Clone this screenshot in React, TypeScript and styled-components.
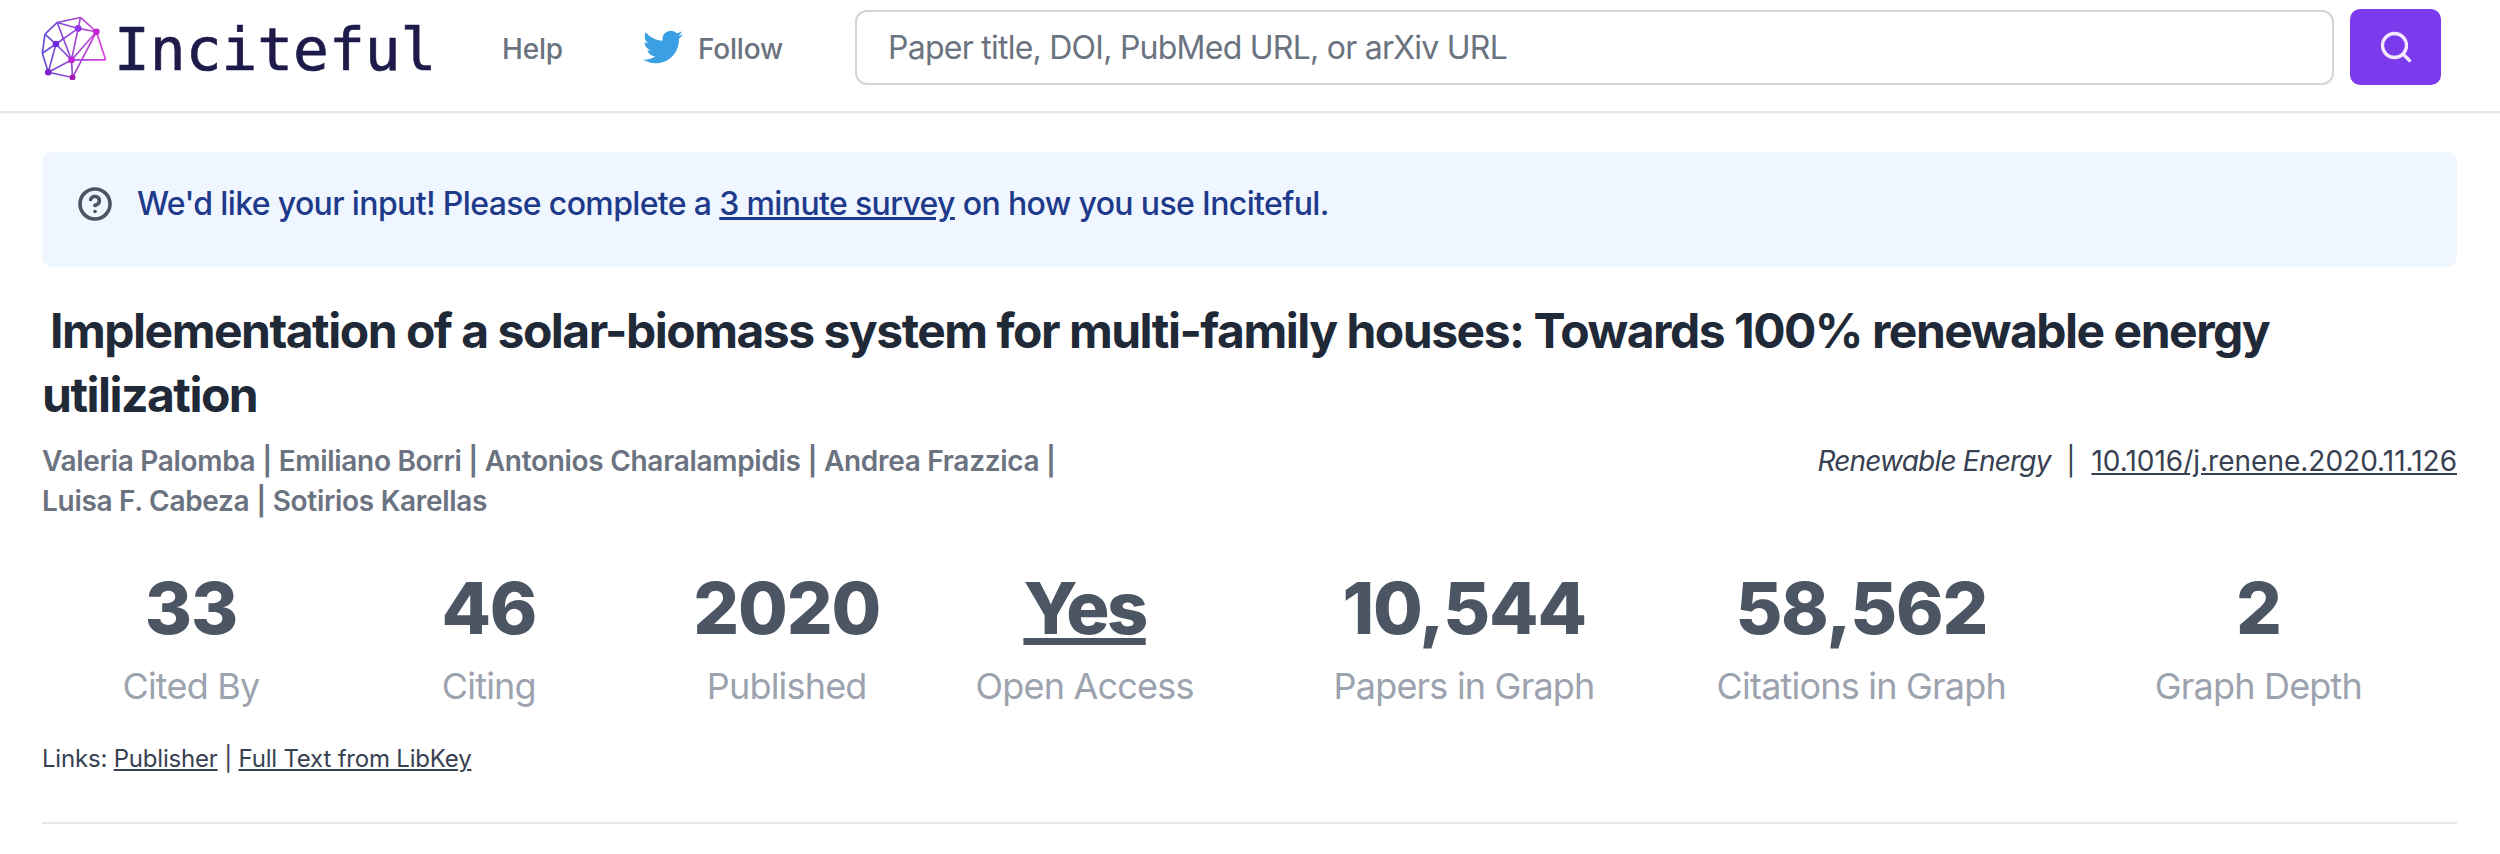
import React from 'react';
import styled, { createGlobalStyle } from 'styled-components';
import { Search, CircleHelp } from 'lucide-react';
import { FaTwitter } from 'react-icons/fa';

const GlobalStyle = createGlobalStyle`
  html, body {
    margin: 0;
    background: #fff;
    font-family: Inter, "Liberation Sans", sans-serif;
  }
  * { box-sizing: border-box; }
`;

const Header = styled.header`
  display: flex;
  align-items: center;
  height: 113px;
  padding: 0 59px 17px 40px;
  border-bottom: 2px solid #e5e7eb;
  box-shadow: 0 1px 3px rgba(0, 0, 0, 0.06);
`;

const Brand = styled.a`
  display: flex;
  align-items: center;
  gap: 6px;
  width: 462px;
  flex: none;
`;

const Wordmark = styled.span`
  margin-top: 6px;
  font-family: "DejaVu Sans Mono", monospace;
  font-size: 59.5px;
  line-height: 64px;
  color: #1e1b4b;
  -webkit-text-stroke: 0.7px #1e1b4b;
`;

const NavLink = styled.a<{ $width: number }>`
  display: flex;
  align-items: center;
  gap: 15px;
  width: ${(p) => p.$width}px;
  flex: none;
  padding-top: 4px;
  font-size: 28px;
  font-weight: 500;
  letter-spacing: -0.2px;
  color: #6b7280;
  svg { margin-top: -4px; }
`;

const SearchInput = styled.div`
  flex: 1;
  height: 75px;
  display: flex;
  align-items: center;
  padding: 0 31px;
  border: 2px solid #d1d5db;
  border-radius: 12px;
  font-size: 32px;
  letter-spacing: -0.75px;
  color: #6b7280;
`;

const SearchButton = styled.button`
  flex: none;
  width: 91px;
  height: 76px;
  margin-left: 16px;
  display: flex;
  align-items: center;
  justify-content: center;
  background: #7c3aed;
  border: 0;
  border-radius: 10px;
  color: #f3e8ff;
`;

const Main = styled.main`
  padding: 39px 43px 0 42px;
`;

const Notice = styled.div`
  display: flex;
  align-items: center;
  gap: 24px;
  height: 115px;
  padding: 0 35px 12px;
  background: #eff6ff;
  border-radius: 10px;
  font-size: 32px;
  font-weight: 500;
  letter-spacing: -0.64px;
  color: #1e3a8a;
  svg { color: #4b5563; flex: none; }
  a { color: inherit; text-decoration: underline; }
`;

const Title = styled.h1`
  margin: 32px 0 0;
  font-size: 48px;
  line-height: 64px;
  font-weight: 700;
  letter-spacing: -1.5px;
  color: #1f2937;
  text-indent: 8px;
`;

const MetaRow = styled.div`
  display: flex;
  justify-content: space-between;
  margin-top: 14px;
`;

const Authors = styled.div`
  width: 1050px;
  font-size: 28px;
  line-height: 40px;
  font-weight: 600;
  letter-spacing: -0.3px;
  color: #6b7280;
`;

const Source = styled.div`
  font-size: 28px;
  line-height: 40px;
  color: #374151;
  em { font-style: italic; letter-spacing: -0.8px; }
  a { color: inherit; text-decoration: underline; }
`;

const StatsGrid = styled.div`
  display: grid;
  grid-template-columns: 1fr 1fr;
  gap: 32px;
  margin-top: 47px;
`;

const StatGroup = styled.div<{ $cols: number }>`
  display: grid;
  grid-template-columns: repeat(${(p) => p.$cols}, 1fr);
`;

const Stat = styled.div`
  text-align: center;
`;

const StatValue = styled.div<{ $link?: boolean }>`
  font-size: 72px;
  line-height: 80px;
  font-weight: 800;
  letter-spacing: ${(p) => (p.$link ? '-2.5px' : '-1.2px')};
  color: #4b5563;
  text-decoration: ${(p) => (p.$link ? 'underline' : 'none')};
`;

const StatLabel = styled.div`
  margin-top: 14px;
  font-size: 36px;
  line-height: 48px;
  letter-spacing: -0.8px;
  color: #9ca3af;
`;

const Links = styled.div`
  margin-top: 33px;
  font-size: 24px;
  line-height: 32px;
  letter-spacing: -0.2px;
  color: #374151;
  a { color: inherit; text-decoration: underline; }
`;

const Divider = styled.hr`
  margin: 47px 0 0;
  border: 0;
  border-top: 2px solid #e5e7eb;
`;

const edges = [
  [75, 97, 112, 62], [112, 62, 182, 47], [182, 47, 230, 90], [112, 62, 175, 80],
  [182, 47, 175, 80], [175, 80, 230, 90], [230, 90, 258, 175], [258, 175, 155, 175],
  [230, 90, 155, 175], [175, 80, 155, 175], [112, 62, 155, 175], [175, 80, 108, 127],
  [75, 97, 108, 127], [75, 97, 67, 155], [108, 127, 67, 155], [108, 127, 155, 175],
  [67, 155, 85, 212], [108, 127, 85, 212], [85, 212, 155, 175], [85, 212, 158, 228],
  [155, 175, 158, 228], [230, 90, 158, 228],
];

const nodes = [
  [108, 127, 10, '#6d28d9'], [175, 80, 10, '#9333ea'], [230, 90, 10, '#c026d3'],
  [155, 175, 10, '#c026d3'], [85, 212, 10, '#7e22ce'], [158, 228, 9, '#a21caf'],
] as const;

const Logo = () => (
  <svg width="68" height="65" viewBox="60 40 205 195" fill="none">
    <defs>
      <linearGradient id="net" x1="60" y1="0" x2="265" y2="0" gradientUnits="userSpaceOnUse">
        <stop offset="0" stopColor="#5b4fd6" />
        <stop offset="1" stopColor="#e23fd8" />
      </linearGradient>
    </defs>
    {edges.map(([x1, y1, x2, y2], i) => (
      <line key={i} x1={x1} y1={y1} x2={x2} y2={y2} stroke="url(#net)" strokeWidth="5" />
    ))}
    {nodes.map(([cx, cy, r, fill], i) => (
      <circle key={i} cx={cx} cy={cy} r={r} fill={fill} />
    ))}
  </svg>
);

const stats = [
  [
    { value: '33', label: 'Cited By' },
    { value: '46', label: 'Citing' },
    { value: '2020', label: 'Published' },
    { value: 'Yes', label: 'Open Access', link: true },
  ],
  [
    { value: '10,544', label: 'Papers in Graph' },
    { value: '58,562', label: 'Citations in Graph' },
    { value: '2', label: 'Graph Depth' },
  ],
];

export default function App() {
  return (
    <>
      <GlobalStyle />
      <Header>
        <Brand>
          <Logo />
          <Wordmark>Inciteful</Wordmark>
        </Brand>
        <NavLink $width={141}>Help</NavLink>
        <NavLink $width={212}>
          <FaTwitter size={40} color="#3b9fe3" />
          Follow
        </NavLink>
        <SearchInput>Paper title, DOI, PubMed URL, or arXiv URL</SearchInput>
        <SearchButton aria-label="Search">
          <Search size={36} strokeWidth={2.2} />
        </SearchButton>
      </Header>
      <Main>
        <Notice>
          <CircleHelp size={36} strokeWidth={2.4} />
          <span>
            We'd like your input! Please complete a <a href="#survey">3 minute survey</a> on how you use Inciteful.
          </span>
        </Notice>
        <Title>
          Implementation of a solar-biomass system for multi-family houses: Towards 100% renewable energy utilization
        </Title>
        <MetaRow>
          <Authors>
            Valeria Palomba | Emiliano Borri | Antonios Charalampidis | Andrea Frazzica | Luisa F. Cabeza | Sotirios Karellas
          </Authors>
          <Source>
            <em>Renewable Energy</em>&nbsp; | &nbsp;<a href="#doi">10.1016/j.renene.2020.11.126</a>
          </Source>
        </MetaRow>
        <StatsGrid>
          {stats.map((group, i) => (
            <StatGroup key={i} $cols={group.length}>
              {group.map((s) => (
                <Stat key={s.label}>
                  <StatValue $link={'link' in s}>{s.value}</StatValue>
                  <StatLabel>{s.label}</StatLabel>
                </Stat>
              ))}
            </StatGroup>
          ))}
        </StatsGrid>
        <Links>
          Links: <a href="#publisher">Publisher</a> | <a href="#libkey">Full Text from LibKey</a>
        </Links>
        <Divider />
      </Main>
    </>
  );
}
